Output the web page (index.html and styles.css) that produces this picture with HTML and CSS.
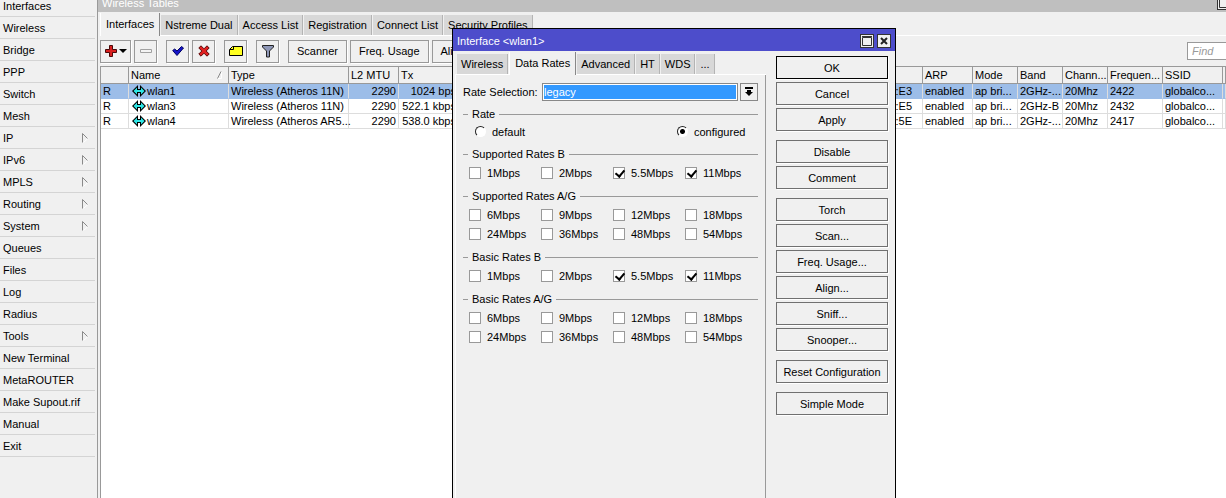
FILE: index.html
```
<!DOCTYPE html>
<html lang="en">
<head>
    <meta charset="UTF-8">
    <meta name="viewport" content="width=device-width, initial-scale=1.0">
    <title>Wireless Tables</title>
    <link rel="stylesheet" href="styles.css">
</head>
<body>
    <svg class="defs" width="0" height="0">
        <symbol id="wlan" viewBox="0 0 14 12">
            <path d="M6 0v12L0 6zM8 0v12l6-6z" fill="#000"/>
            <path d="M5 2.500v7L1.500 6zM9 2.500v7L12.500 6z" fill="#2ee6e6"/>
            <path d="M5 5h4v2H5z" fill="#2ee6e6"/>
            <path d="M6 4h2v1H6zM6 7h2v1H6z" fill="#000"/>
        </symbol>
        <symbol id="sub" viewBox="0 0 7 10">
            <path d="M1.500 9.500l5-4.500" fill="none" stroke="#fff"/>
            <path d="M.5 9.500V.5l5 5" fill="none" stroke="#8a8a8a"/>
        </symbol>
    </svg>

    <div class="desktop">
        <nav class="menu">
            <a href="#">Interfaces</a>
            <a href="#">Wireless</a>
            <a href="#">Bridge</a>
            <a href="#">PPP</a>
            <a href="#">Switch</a>
            <a href="#">Mesh</a>
            <a href="#">IP<svg class="sub"><use href="#sub"/></svg></a>
            <a href="#">IPv6<svg class="sub"><use href="#sub"/></svg></a>
            <a href="#">MPLS<svg class="sub"><use href="#sub"/></svg></a>
            <a href="#">Routing<svg class="sub"><use href="#sub"/></svg></a>
            <a href="#">System<svg class="sub"><use href="#sub"/></svg></a>
            <a href="#">Queues</a>
            <a href="#">Files</a>
            <a href="#">Log</a>
            <a href="#">Radius</a>
            <a href="#">Tools<svg class="sub"><use href="#sub"/></svg></a>
            <a href="#">New Terminal</a>
            <a href="#">MetaROUTER</a>
            <a href="#">Make Supout.rif</a>
            <a href="#">Manual</a>
            <a href="#">Exit</a>
        </nav>

        <main class="tables">
            <header class="tables-title">
                <span>Wireless Tables</span>
                <button class="win-btn" aria-label="Maximize"><svg viewBox="0 0 10 10"><path d="M.5 1.500h9v8h-9zM0 .5h10" fill="none" stroke="#333"/></svg></button>
            </header>

            <div class="tabs">
                <button class="tab active">Interfaces</button>
                <button class="tab">Nstreme Dual</button>
                <button class="tab">Access List</button>
                <button class="tab">Registration</button>
                <button class="tab">Connect List</button>
                <button class="tab">Security Profiles</button>
            </div>

            <div class="toolbar">
                <button class="tool tool-add" aria-label="Add">
                    <svg width="22" height="12" viewBox="0 0 22 12">
                        <path d="M4.500.5h3v4h4v3h-4v4h-3v-4h-4v-3h4z" fill="#d81e1e" stroke="#4a0808"/>
                        <path d="M14 4h8l-4 4z" fill="#000"/>
                    </svg>
                </button>
                <button class="tool" aria-label="Remove">
                    <svg width="12" height="12" viewBox="0 0 12 12"><path d="M.5 4.500h11v3H.5z" fill="#f4f4f4" stroke="#a0a0a0"/></svg>
                </button>
                <button class="tool group-start" aria-label="Enable">
                    <svg width="12" height="12" viewBox="0 0 12 12"><path d="M.7 5.500l2-1.500L5 6l4.500-4.500 2 1.500L5 10.500z" fill="#1414c8" stroke="#000060"/></svg>
                </button>
                <button class="tool" aria-label="Disable">
                    <svg width="12" height="12" viewBox="0 0 12 12"><path d="M3 .8L6 3.800l3-3L11.200 3l-3 3 3 3L9 11.200l-3-3-3 3L.8 9l3-3-3-3z" fill="#e02020" stroke="#5a0808"/></svg>
                </button>
                <button class="tool group-start" aria-label="Comment">
                    <svg width="14" height="12" viewBox="0 0 14 12"><path d="M3.500 1.500h10v9H.5v-6z" fill="#ffff20" stroke="#000"/><path d="M4.500 2v2.500H1" fill="none" stroke="#000"/></svg>
                </button>
                <button class="tool group-start" aria-label="Filter">
                    <svg width="12" height="14" viewBox="0 0 12 14"><path d="M.5 1.500h11v1.500l-4 4v6h-3V7l-4-4z" fill="#8f98b8" stroke="#222"/></svg>
                </button>
                <button class="tool tool-text group-start">Scanner</button>
                <button class="tool tool-text">Freq. Usage</button>
                <button class="tool tool-text">Align...</button>
                <input class="find" type="text" placeholder="Find" aria-label="Find">
            </div>

            <div class="list-wrap">
                <table class="list">
                    <colgroup>
                        <col class="c-flag"><col class="c-name"><col class="c-type"><col class="c-50"><col class="c-60"><col class="c-mac">
                        <col class="c-50"><col class="c-45"><col class="c-45"><col class="c-45"><col class="c-55"><col class="c-60"><col>
                    </colgroup>
                    <thead>
                        <tr>
                            <th></th>
                            <th><div class="sorted">Name<svg width="6" height="8" viewBox="0 0 6 8"><path d="M.5 7.500L4 .5" fill="none" stroke="#888"/><path d="M4.500 1v6.500H1" fill="none" stroke="#fff"/></svg></div></th>
                            <th>Type</th><th>L2 MTU</th><th>Tx</th><th></th>
                            <th>ARP</th><th>Mode</th><th>Band</th><th>Chann...</th><th>Frequen...</th><th>SSID</th><th></th>
                        </tr>
                    </thead>
                    <tbody>
                        <tr class="selected">
                            <td>R</td>
                            <td><div class="iface"><svg><use href="#wlan"/></svg>wlan1</div></td>
                            <td>Wireless (Atheros 11N)</td><td class="num">2290</td><td class="num">1024 bps</td><td class="mac">:E3</td>
                            <td>enabled</td><td>ap bri...</td><td>2GHz-...</td><td>20Mhz</td><td>2422</td><td>globalco...</td><td></td>
                        </tr>
                        <tr>
                            <td>R</td>
                            <td><div class="iface"><svg><use href="#wlan"/></svg>wlan3</div></td>
                            <td>Wireless (Atheros 11N)</td><td class="num">2290</td><td class="num">522.1 kbps</td><td class="mac">:E5</td>
                            <td>enabled</td><td>ap bri...</td><td>2GHz-B</td><td>20Mhz</td><td>2432</td><td>globalco...</td><td></td>
                        </tr>
                        <tr>
                            <td>R</td>
                            <td><div class="iface"><svg><use href="#wlan"/></svg>wlan4</div></td>
                            <td>Wireless (Atheros AR5...</td><td class="num">2290</td><td class="num">538.0 kbps</td><td class="mac">:5E</td>
                            <td>enabled</td><td>ap bri...</td><td>2GHz-...</td><td>20Mhz</td><td>2417</td><td>globalco...</td><td></td>
                        </tr>
                    </tbody>
                </table>
            </div>
        </main>

        <section class="dialog" role="dialog" aria-label="Interface wlan1">
            <header class="dialog-title">
                <span>Interface &lt;wlan1&gt;</span>
                <button class="win-btn" aria-label="Maximize"><svg viewBox="0 0 10 10"><path d="M.5 1.500h9v8h-9zM0 .5h10" fill="none" stroke="#333"/></svg></button>
                <button class="win-btn" aria-label="Close"><svg viewBox="0 0 10 10"><path d="M2 2l6 6M8 2L2 8" fill="none" stroke="#222" stroke-width="2"/></svg></button>
            </header>

            <div class="dialog-body">
                <div class="dialog-main">
                    <div class="tabs">
                        <button class="tab">Wireless</button>
                        <button class="tab active">Data Rates</button>
                        <button class="tab">Advanced</button>
                        <button class="tab">HT</button>
                        <button class="tab">WDS</button>
                        <button class="tab">...</button>
                    </div>

                    <form class="pane">
                        <div class="field">
                            <label for="rateSelection">Rate Selection:</label>
                            <select id="rateSelection">
                                <option>legacy</option>
                            </select>
                            <button type="button" class="drop" aria-label="Open list">
                                <svg width="8" height="10" viewBox="0 0 8 10"><path d="M0 0h8v2H0zM2 3h4v2h2L4 9 0 5h2z" fill="#000"/></svg>
                            </button>
                        </div>

                        <fieldset>
                            <legend>Rate</legend>
                            <div class="radios">
                                <label><input type="radio" name="rate">default</label>
                                <label><input type="radio" name="rate" checked>configured</label>
                            </div>
                        </fieldset>

                        <fieldset>
                            <legend>Supported Rates B</legend>
                            <div class="rates">
                                <label><input type="checkbox">1Mbps</label>
                                <label><input type="checkbox">2Mbps</label>
                                <label><input type="checkbox" checked>5.5Mbps</label>
                                <label><input type="checkbox" checked>11Mbps</label>
                            </div>
                        </fieldset>

                        <fieldset>
                            <legend>Supported Rates A/G</legend>
                            <div class="rates">
                                <label><input type="checkbox">6Mbps</label>
                                <label><input type="checkbox">9Mbps</label>
                                <label><input type="checkbox">12Mbps</label>
                                <label><input type="checkbox">18Mbps</label>
                                <label><input type="checkbox">24Mbps</label>
                                <label><input type="checkbox">36Mbps</label>
                                <label><input type="checkbox">48Mbps</label>
                                <label><input type="checkbox">54Mbps</label>
                            </div>
                        </fieldset>

                        <fieldset>
                            <legend>Basic Rates B</legend>
                            <div class="rates">
                                <label><input type="checkbox">1Mbps</label>
                                <label><input type="checkbox">2Mbps</label>
                                <label><input type="checkbox" checked>5.5Mbps</label>
                                <label><input type="checkbox" checked>11Mbps</label>
                            </div>
                        </fieldset>

                        <fieldset>
                            <legend>Basic Rates A/G</legend>
                            <div class="rates">
                                <label><input type="checkbox">6Mbps</label>
                                <label><input type="checkbox">9Mbps</label>
                                <label><input type="checkbox">12Mbps</label>
                                <label><input type="checkbox">18Mbps</label>
                                <label><input type="checkbox">24Mbps</label>
                                <label><input type="checkbox">36Mbps</label>
                                <label><input type="checkbox">48Mbps</label>
                                <label><input type="checkbox">54Mbps</label>
                            </div>
                        </fieldset>
                    </form>
                </div>

                <div class="actions">
                    <div class="action-group">
                        <button class="btn btn-default">OK</button>
                        <button class="btn">Cancel</button>
                        <button class="btn">Apply</button>
                    </div>
                    <div class="action-group">
                        <button class="btn">Disable</button>
                        <button class="btn">Comment</button>
                    </div>
                    <div class="action-group">
                        <button class="btn">Torch</button>
                        <button class="btn">Scan...</button>
                        <button class="btn">Freq. Usage...</button>
                        <button class="btn">Align...</button>
                        <button class="btn">Sniff...</button>
                        <button class="btn">Snooper...</button>
                    </div>
                    <div class="action-group">
                        <button class="btn">Reset Configuration</button>
                    </div>
                    <div class="action-group">
                        <button class="btn">Simple Mode</button>
                    </div>
                </div>
            </div>
        </section>
    </div>
</body>
</html>
```
FILE: styles.css
```
* {
    margin: 0;
    padding: 0;
    box-sizing: border-box;
}

body {
    font-family: "Liberation Sans", Arial, sans-serif;
    font-size: 11px;
    line-height: 14px;
    color: #000;
    background: #f0f0f0;
}

button,
input,
select {
    font: inherit;
    color: inherit;
}

.defs {
    display: block;
}

.desktop {
    position: relative;
    display: flex;
    height: 100vh;
    overflow: hidden;
}

/* left menu, scrolled a little under the top edge */
.menu {
    flex: 0 0 97px;
    margin-top: -5px;
    padding-right: 2px;
}

.menu a {
    display: flex;
    align-items: center;
    justify-content: space-between;
    height: 22px;
    padding: 0 6px 0 3px;
    border-bottom: 1px solid #d4d4d4;
    color: #000;
    text-decoration: none;
}

.sub {
    width: 7px;
    height: 10px;
}

/* wireless tables window */
.tables {
    flex: 1;
    min-width: 0;
    display: flex;
    flex-direction: column;
    margin-top: -8px;
    padding-left: 2px;
    border-left: 1px solid #999;
}

.tables-title {
    flex: none;
    display: flex;
    align-items: center;
    justify-content: space-between;
    height: 20px;
    margin-left: -2px;
    padding: 2px 0 0 4px;
    background: #bfbfbf;
    color: #fff;
}

.tables-title .win-btn {
    margin-right: -5px;
}

.win-btn {
    display: flex;
    align-items: center;
    justify-content: center;
    width: 14px;
    height: 14px;
    background: #f0f0f0;
    border: 1px solid #333;
}

.win-btn svg {
    width: 10px;
    height: 10px;
}

.tabs {
    display: flex;
    align-items: flex-end;
    gap: 1px;
    height: 24px;
    border-bottom: 1px solid #fff;
}

.tab {
    height: 20px;
    padding: 0 4px;
    background: #d8d8d8;
    border: 0;
    border-right: 1px solid #b4b4b4;
}

.tab.active {
    height: 23px;
    margin-bottom: -1px;
    padding: 0 5px 2px;
    background: #f0f0f0;
    border-right: 1px solid #888;
    border-left: 1px solid #fff;
}

.toolbar {
    display: flex;
    align-items: center;
    gap: 3px;
    height: 30px;
}

.tool {
    display: flex;
    align-items: center;
    justify-content: center;
    flex: none;
    width: 23px;
    height: 23px;
    background: #f0f0f0;
    border: 1px solid #999;
    box-shadow: 1px 1px 0 #fff;
}

.tool-add {
    width: 31px;
}

.tool-text {
    width: auto;
    padding: 0 8px;
}

.group-start {
    margin-left: 6px;
}

.find {
    width: 60px;
    height: 18px;
    margin: 0 -21px 0 auto;
    padding: 0 4px;
    background: #fff;
    border: 1px solid #999;
    font-style: italic;
}

.find::placeholder {
    color: #999;
}

.list-wrap {
    flex: 1;
    border-top: 1px solid #999;
    border-left: 1px solid #999;
    background: #fff;
}

.list {
    width: 100%;
    table-layout: fixed;
    border-collapse: separate;
    border-spacing: 0;
}

.list th,
.list td {
    height: 15px;
    padding: 0 1px 0 2px;
    line-height: 14px;
    font-weight: normal;
    text-align: left;
    white-space: nowrap;
    border-right: 1px solid #ddd;
    border-bottom: 1px solid #ddd;
}

.list th {
    height: 17px;
    line-height: 16px;
    background: #f0f0f0;
    border-color: #999;
}

.list .selected td {
    background: #9cbde8;
    border-bottom-color: #9cbde8;
}

.list .num {
    padding-right: 2px;
    text-align: right;
}

.list .mac {
    padding-right: 10px;
    text-align: right;
}

.c-flag { width: 28px; }
.c-name { width: 100px; }
.c-type { width: 120px; }
.c-45 { width: 45px; }
.c-50 { width: 50px; }
.c-55 { width: 55px; }
.c-60 { width: 60px; }
.c-mac { width: 464px; }

.sorted {
    display: flex;
    align-items: center;
    justify-content: space-between;
    padding-right: 4px;
}

.iface {
    display: flex;
    align-items: center;
    gap: 1px;
    padding-left: 1px;
}

.iface svg {
    width: 14px;
    height: 12px;
}

/* interface dialog */
.dialog {
    position: absolute;
    top: 28px;
    bottom: -20px;
    left: 452px;
    display: flex;
    flex-direction: column;
    width: 444px;
    background: #f0f0f0;
    border: 1px solid #000;
}

.dialog-title {
    display: flex;
    align-items: center;
    gap: 3px;
    height: 22px;
    padding: 2px 4px 0 4px;
    background: #4d4dcb;
    color: #fff;
}

.dialog-title span {
    flex: 1;
}

.dialog-body {
    flex: 1;
    display: flex;
    padding: 0 7px 0 2px;
}

.dialog-main {
    flex: 1;
    display: flex;
    flex-direction: column;
}

.dialog-main .tabs {
    padding-left: 2px;
}

.pane {
    flex: 1;
    padding: 8px 7px;
    border-left: 1px solid #fff;
    border-right: 1px solid #999;
}

.field {
    display: flex;
    align-items: center;
    height: 18px;
    margin-bottom: 4px;
}

.field label {
    flex: 0 0 79px;
    white-space: nowrap;
}

.field select {
    flex: 1;
    height: 18px;
    padding: 0 1px;
    appearance: none;
    background: #3399ff;
    border: 1px solid #888;
    border-radius: 0;
    box-shadow: inset 0 0 0 1px #fff;
    color: #fff;
}

.drop {
    display: flex;
    align-items: center;
    justify-content: center;
    width: 18px;
    height: 18px;
    margin-left: 2px;
    background: #f0f0f0;
    border: 1px solid #888;
}

fieldset {
    margin-bottom: 5px;
    border: 0;
    border-top: 1px solid #999;
}

legend {
    height: 18px;
    margin-left: 5px;
    padding: 0 4px;
    line-height: 18px;
}

.radios,
.rates {
    display: grid;
    padding-left: 6px;
}

.rates {
    grid-template-columns: repeat(4, 72px);
    grid-auto-rows: 19px;
}

.radios {
    grid-template-columns: 202px auto;
    grid-auto-rows: 17px;
    padding-left: 12px;
}

.radios label,
.rates label {
    display: flex;
    align-items: center;
    gap: 6px;
}

.rates input,
.radios input {
    flex: none;
    width: 12px;
    height: 12px;
    appearance: none;
    background: #fff;
    border: 1px solid #999;
}

.radios input {
    width: 11px;
    height: 11px;
    border-color: #222 #fff #fff #222;
    border-radius: 50%;
}

.radios input:checked {
    background: radial-gradient(circle, #000 2px, #fff 3px);
}

/* tick built from two borders of a rotated box */
.rates input:checked::before {
    content: "";
    display: block;
    width: 4px;
    height: 7px;
    margin: 0 0 0 3px;
    border: solid #000;
    border-width: 0 2px 2px 0;
    transform: rotate(40deg);
}

.actions {
    flex: 0 0 112px;
    display: flex;
    flex-direction: column;
    gap: 9px;
    margin: 5px 0 0 10px;
}

.action-group {
    display: flex;
    flex-direction: column;
    gap: 3px;
}

.btn {
    height: 23px;
    background: #f0f0f0;
    border: 1px solid #707070;
    box-shadow: 1px 1px 0 #fff;
}

.btn-default {
    border-color: #000;
}
```
